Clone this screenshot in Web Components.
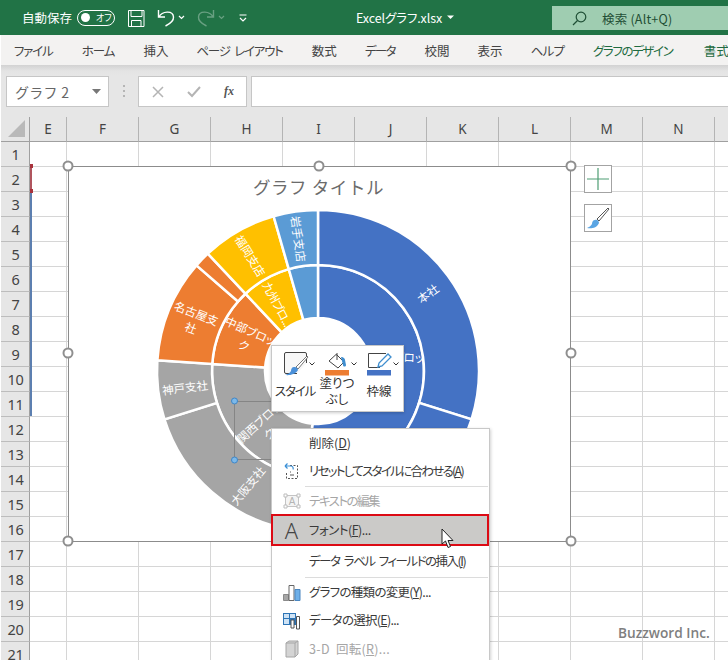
<!DOCTYPE html>
<html lang="ja">
<head>
<meta charset="utf-8">
<title>Excelグラフ.xlsx</title>
<style>
  html, body { margin: 0; padding: 0; background: #fff; }
  body { width: 728px; height: 660px; overflow: hidden; position: relative; font-family: "Noto Sans CJK JP", "Noto Sans", sans-serif; }
</style>
</head>
<body>
<xl-titlebar></xl-titlebar>
<xl-tabs>
  <xl-tab style="--ls:-1.2px">ファイル</xl-tab><xl-tab style="--ls:-1px">ホーム</xl-tab><xl-tab>挿入</xl-tab><xl-tab style="--ls:-1.25px">ページ レイアウト</xl-tab><xl-tab>数式</xl-tab><xl-tab style="--ls:-1.6px">データ</xl-tab><xl-tab>校閲</xl-tab><xl-tab>表示</xl-tab><xl-tab style="--ls:-.7px">ヘルプ</xl-tab><xl-tab accent style="--ls:-1.4px">グラフのデザイン</xl-tab><xl-tab accent style="margin-left:2px">書式</xl-tab>
</xl-tabs>
<xl-formula></xl-formula>
<xl-sheet></xl-sheet>
<xl-chart></xl-chart>
<xl-chart-tools></xl-chart-tools>
<xl-minibar></xl-minibar>
<xl-menu>
  <xl-menu-item h="28">削除(<u>D</u>)</xl-menu-item>
  <xl-menu-item h="28" icon="reset" style="--ls:-1.7px">リセットしてスタイルに合わせる(<u>A</u>)</xl-menu-item>
  <xl-menu-sep></xl-menu-sep>
  <xl-menu-item h="26" icon="edit" disabled style="--ls:-1.5px">テキストの編集</xl-menu-item>
  <xl-menu-item h="32" icon="font" hot style="--ls:-.5px">フォント(<u>F</u>)...</xl-menu-item>
  <xl-menu-item h="30" style="--ls:-1.5px">データ ラベル フィールドの挿入(<u>I</u>)</xl-menu-item>
  <xl-menu-sep></xl-menu-sep>
  <xl-menu-item h="27" icon="bars" style="--ls:-.7px">グラフの種類の変更(<u>Y</u>)...</xl-menu-item>
  <xl-menu-item h="29" icon="table" style="--ls:-.7px">データの選択(<u>E</u>)...</xl-menu-item>
  <xl-menu-item h="28" icon="cube" disabled style="--ls:.3px">3-D 回転(<u>R</u>)...</xl-menu-item>
</xl-menu>
<xl-cursor></xl-cursor>
<xl-watermark>Buzzword Inc.</xl-watermark>

<script>
class XlTitlebar extends HTMLElement {
  constructor() {
    super();
    this.attachShadow({ mode: 'open' });
    this.shadowRoot.innerHTML = `
      <style>
        :host { display: flex; align-items: center; height: 35px; background: #217346; color: #fff; font: 12.5px "Noto Sans CJK JP", sans-serif; font-feature-settings: "palt"; box-sizing: border-box; }
        .auto { margin-left: 22px; width: 55px; font-size: 12.5px; }
        .toggle { width: 38px; height: 16px; box-sizing: border-box; border: 1.5px solid #fff; border-radius: 9px; display: flex; align-items: center; padding-left: 3px; gap: 6px; }
        .toggle i { width: 9px; height: 9px; border-radius: 50%; background: #fff; }
        .toggle span { font-size: 9px; line-height: 1; }
        svg { display: block; flex: none; }
        .save { margin-left: 13px; }
        .undo { margin-left: 12px; }
        .name { margin-left: 108px; width: 86px; font-size: 12.5px; white-space: nowrap; letter-spacing: -.1px; }
        .caret { margin-left: 5px; }
        .search { margin-left: auto; margin-top: 1px; width: 176px; height: 24px; background: #9fcdb1; display: flex; align-items: center; color: #1f4f35; font-size: 12.5px; }
        .search svg { margin-left: 20px; }
        .search span { margin-left: 15px; letter-spacing: .2px; }
      </style>
      <span class="auto">自動保存</span>
      <span class="toggle"><i></i><span>オフ</span></span>
      <svg class="save" width="17" height="18" viewBox="0 0 17 18" fill="none" stroke="#fff" stroke-width="1">
        <path d="M.5 1.5h15.5v16H.5zM3 1.5v6h11v-6M3.500 17.500v-6h9.500v6"/>
      </svg>
      <svg class="undo" width="30" height="20" viewBox="0 0 30 20" fill="none" stroke="#fff">
        <path stroke-width="1.400" d="M1.500 2v7h6.500M2 9c3-6 14-7 14.500 0 .3 4-4 7-8 9"/>
        <path stroke-width="1.200" d="M22 8l2.500 2.500L27 8"/>
      </svg>
      <svg style="margin-left:10px" width="30" height="20" viewBox="0 0 30 20" fill="none" stroke="#fff" opacity=".32">
        <path stroke-width="1.400" d="M16.500 2v7H10M16 9C13 3 2 2 1.500 9c-.3 4 4 7 8 9"/>
        <path stroke-width="1.200" d="M22 8l2.500 2.500L27 8"/>
      </svg>
      <svg style="margin-left:11px" width="10" height="10" viewBox="0 0 10 10" fill="none" stroke="#fff" stroke-width="1.200">
        <path d="M1.500 2h7M2 5l3 3 3-3"/>
      </svg>
      <span class="name">Excelグラフ.xlsx</span>
      <svg class="caret" width="7" height="5" viewBox="0 0 7 5"><path d="M0 .5h7L3.500 4z" fill="#fff"/></svg>
      <div class="search">
        <svg width="15" height="15" viewBox="0 0 15 15" fill="none" stroke="#1f4f35" stroke-width="1.200"><circle cx="9" cy="6" r="4.800"/><path d="M5.500 9.500L1 14"/></svg>
        <span>検索 (Alt+Q)</span>
      </div>`;
  }
}

class XlTabs extends HTMLElement {
  constructor() {
    super();
    this.attachShadow({ mode: 'open' });
    this.shadowRoot.innerHTML = `
      <style>
        :host { display: flex; align-items: center; gap: 28px; height: 30px; margin-left: 1px; padding-left: 13px; background: #f3f2f1; white-space: nowrap; overflow: hidden; }
      </style>
      <slot></slot>`;
  }
}

class XlTab extends HTMLElement {
  constructor() {
    super();
    this.attachShadow({ mode: 'open' });
    this.shadowRoot.innerHTML = `
      <style>
        :host { display: block; flex: none; font: 12.5px "Noto Sans CJK JP", sans-serif; font-feature-settings: "palt"; color: #444; letter-spacing: var(--ls, 0); word-spacing: 3px; margin-right: calc(-1 * var(--ls, 0px)); }
        :host([accent]) { color: #1e6b41; }
      </style>
      <slot></slot>`;
  }
}

class XlFormula extends HTMLElement {
  constructor() {
    super();
    this.attachShadow({ mode: 'open' });
    this.shadowRoot.innerHTML = `
      <style>
        :host { display: flex; align-items: flex-start; height: 52px; margin-left: 1px; padding-top: 11px; box-sizing: border-box; background: linear-gradient(#d2d2d2 0, #e4e4e4 6px, #e6e6e6 10px); }
        .box { height: 31px; box-sizing: border-box; background: #fff; border: 1px solid #c6c6c6; display: flex; align-items: center; }
        .name { margin-left: 5px; width: 103px; color: #666; font: 14px "Noto Sans CJK JP", sans-serif; padding-left: 8px; justify-content: space-between; padding-right: 7px; letter-spacing: .3px; }
        .dots { width: 29px; display: flex; justify-content: center; }
        .fx { width: 109px; color: #444; }
        .fx svg { display: block; }
        .fx b { font: italic bold 12px "Liberation Serif", serif; color: #555; margin-left: 23px; }
        .input { flex: 1; margin-left: 4px; border-right: 0; }
      </style>
      <div class="box name"><span>グラフ 2</span><svg width="9" height="5" viewBox="0 0 9 5"><path d="M0 0h9L4.500 5z" fill="#777"/></svg></div>
      <div class="dots"><svg width="4" height="31" viewBox="0 0 4 31"><path d="M1 9h2v2H1zM1 14h2v2H1zM1 19h2v2H1z" fill="#b5b5b5"/></svg></div>
      <div class="box fx">
        <svg style="margin-left:13px" width="12" height="12" viewBox="0 0 12 12" fill="none" stroke="#b4b4b4" stroke-width="1.500"><path d="M1 1l10 10M11 1L1 11"/></svg>
        <svg style="margin-left:23px" width="14" height="12" viewBox="0 0 14 12" fill="none" stroke="#b4b4b4" stroke-width="2"><path d="M1 6l4 4 8-9"/></svg>
        <b>fx</b>
      </div>
      <div class="box input"></div>`;
  }
}

class XlSheet extends HTMLElement {
  constructor() {
    super();
    this.attachShadow({ mode: 'open' });
    const cols = ['E', 'F', 'G', 'H', 'I', 'J', 'K', 'L', 'M', 'N', ''];
    let cells = '<div class="corner"><svg width="18" height="18" viewBox="0 0 18 18"><path d="M17 0v17H0z" fill="#b9b9b9"/></svg></div>';
    cols.forEach(c => { cells += `<div class="ch">${c}</div>`; });
    for (let r = 1; r <= 21; r++) {
      cells += `<div class="rh">${r}</div>`;
      cols.forEach(() => { cells += '<div class="c"></div>'; });
    }
    this.shadowRoot.innerHTML = `
      <style>
        :host { display: block; margin-left: 1px; height: 543px; overflow: hidden; position: relative; background: #fff; }
        .grid { display: grid; grid-template-columns: 29px 37px repeat(9, 72px) 40px; grid-template-rows: 25px repeat(21, 25px); }
        .corner, .ch, .rh { background: #e6e6e6; color: #444; display: flex; align-items: center; justify-content: center; box-sizing: border-box; }
        .corner { border-right: 1px solid #a0a0a0; border-bottom: 1px solid #a0a0a0; align-items: flex-end; justify-content: flex-end; padding: 0 3px 3px 0; }
        .ch { font: 13.5px "Noto Sans", sans-serif; border-bottom: 1px solid #a0a0a0; border-right: 1px solid #b4b4b4; }
        .rh { font: 14.5px "Noto Sans", sans-serif; border-right: 1px solid #a0a0a0; border-bottom: 1px solid #bdbdbd; letter-spacing: -.3px; padding-left: 1px; }
        .c { box-sizing: border-box; border-right: 1px solid #d6d6d6; border-bottom: 1px solid #d6d6d6; }
        .sel { position: absolute; left: 29px; width: 1.500px; }
        .red { top: 50px; height: 25px; background: #b0555e; }
        .blue { top: 75px; height: 224px; background: #5c7fb0; }
        .tick { position: absolute; left: 29px; width: 3px; height: 4px; background: #a8323c; }
      </style>
      <div class="grid">${cells}</div>
      <div class="sel red"></div><div class="sel blue"></div>
      <div class="tick" style="top:47px"></div><div class="tick" style="top:72px"></div>`;
  }
}

class XlChart extends HTMLElement {
  constructor() {
    super();
    this.attachShadow({ mode: 'open' });
    const cx = 318, cy = 371;
    const pt = (r, a) => {
      const t = a * Math.PI / 180;
      return [(cx + r * Math.sin(t)).toFixed(2), (cy - r * Math.cos(t)).toFixed(2)];
    };
    const sector = (r0, r1, a0, a1, fill) => {
      const big = a1 - a0 > 180 ? 1 : 0;
      const [x0, y0] = pt(r1, a0), [x1, y1] = pt(r1, a1), [x2, y2] = pt(r0, a1), [x3, y3] = pt(r0, a0);
      return `<path fill="${fill}" d="M${x0} ${y0}A${r1} ${r1} 0 ${big} 1 ${x1} ${y1}L${x2} ${y2}A${r0} ${r0} 0 ${big} 0 ${x3} ${y3}Z"/>`;
    };
    const blue = '#4472c4', orange = '#ed7d31', gray = '#a5a5a5', yellow = '#ffc000', sky = '#5b9bd5';
    // inner ring, then outer ring
    const rings = [
      [53, 106, 0, 186, blue], [53, 106, 186, 273.8, gray], [53, 106, 273.8, 316.8, orange], [53, 106, 316.8, 344, yellow], [53, 106, 344, 360, sky],
      [106, 161, 0, 107.5, blue], [106, 161, 107.5, 190, blue], [106, 161, 190, 252.5, gray], [106, 161, 252.5, 273.8, gray],
      [106, 161, 273.8, 311, orange], [106, 161, 311, 316.8, orange], [106, 161, 316.8, 344, yellow], [106, 161, 344, 360, sky]
    ];
    const labels = [
      [428, 294, -36, ['本社']],
      [397, 365, 2, ['関東ブロッ', 'ク']],
      [298, 239, 82, ['岩手支店']],
      [250, 256, 58, ['福岡支店']],
      [277, 304, 62, ['九州ブロ...'], -.8],
      [193.500, 321, 21, ['名古屋支', '社']],
      [247, 338.500, 24, ['中部ブロッ', 'ク']],
      [185, 388, -7, ['神戸支社']],
      [264, 428.500, -42, ['関西ブロッ', 'ク']],
      [248, 486, -50, ['大阪支社']]
    ];
    const labelSvg = labels.map(([x, y, rot, lines, ls]) => {
      const start = -(lines.length - 1) * 7.800;
      const spans = lines.map((l, i) => `<text x="0" y="${start + i * 15.600}" dy=".36em" letter-spacing="${ls || 0}">${l}</text>`).join('');
      return `<g transform="translate(${x} ${y}) rotate(${rot})">${spans}</g>`;
    }).join('');
    const handles = [[68, 166], [319, 166], [571, 166], [68, 353], [571, 353], [68, 541], [319, 541], [571, 541]]
      .map(([x, y]) => `<circle cx="${x}" cy="${y}" r="4.500"/>`).join('');
    this.shadowRoot.innerHTML = `
      <style>
        :host { position: absolute; left: 0; top: 0; width: 728px; height: 660px; display: block; }
        svg { display: block; }
        text { font: 11.5px "Noto Sans CJK JP", sans-serif; font-feature-settings: "palt"; fill: #fff; text-anchor: middle; }
        .title { font-size: 17.500px; font-feature-settings: normal; letter-spacing: .6px; fill: #6b6b6b; }
      </style>
      <svg width="728" height="660" viewBox="0 0 728 660">
        <rect x="68.500" y="166.500" width="502" height="375" fill="#fff" stroke="#8c8c8c"/>
        <text class="title" x="318.500" y="193.500">グラフ タイトル</text>
        <g stroke="#fff" stroke-width="2.500">${rings.map(r => sector(...r)).join('')}</g>
        ${labelSvg}
        <path d="M234.500 401.500h60M234.500 401.500v58h60" fill="none" stroke="#858585"/>
        <g fill="#7cb9ea" stroke="#3f86c6" stroke-width="1"><circle cx="234.500" cy="401" r="3"/><circle cx="234.500" cy="460" r="3"/></g>
        <g fill="#fff" stroke="#8f8f8f" stroke-width="2">${handles}</g>
      </svg>`;
  }
}

class XlChartTools extends HTMLElement {
  constructor() {
    super();
    this.attachShadow({ mode: 'open' });
    this.shadowRoot.innerHTML = `
      <style>
        :host { position: absolute; left: 584px; top: 165px; display: flex; flex-direction: column; gap: 11px; }
        div { width: 28px; height: 28px; box-sizing: border-box; background: #fff; border: 1px solid #a3a3a3; display: flex; align-items: center; justify-content: center; }
        svg { display: block; }
      </style>
      <div><svg width="22" height="22" viewBox="0 0 22 22"><path d="M11 0v22M0 11h22" stroke="#4f9e74" stroke-width="1.200"/></svg></div>
      <div><svg width="24" height="24" viewBox="0 0 24 24">
        <path d="M22 2L11 13l2 2L23 3z" fill="#fff" stroke="#555" stroke-width="1"/>
        <path d="M1 22c4 1 10 0 12-5 0-2-2-4-4-3-2 0-3 2-3 4-1 2-3 3-5 4z" fill="#5aa5e3"/>
      </svg></div>`;
  }
}

class XlMinibar extends HTMLElement {
  constructor() {
    super();
    this.attachShadow({ mode: 'open' });
    const chev = '<path d="M35.500 10.500l2.500 2.500 2.500-2.500" fill="none" stroke="#333"/>';
    this.shadowRoot.innerHTML = `
      <style>
        :host { position: absolute; left: 271px; top: 345px; width: 133px; height: 67px; box-sizing: border-box; background: #fff; border: 1px solid #c8c8c8; box-shadow: 0 1px 3px rgba(0,0,0,.2); display: flex; padding: 6px 0 0 2px; font: 12.5px "Noto Sans CJK JP", sans-serif; font-feature-settings: "palt"; color: #333; }
        .b { width: 42px; display: flex; flex-direction: column; align-items: center; }
        svg { display: block; flex: none; }
        .l { height: 32px; display: flex; align-items: center; text-align: center; line-height: 16px; margin-top: -1px; white-space: nowrap; }
        .tight { letter-spacing: -1.200px; }
      </style>
      <div class="b">
        <svg width="42" height="24" viewBox="0 0 42 24">
          <path d="M23 21.500H12a1.500 1.500 0 0 1-1.500-1.500V2A1.500 1.500 0 0 1 12 .5h19A1.500 1.500 0 0 1 32.500 2v9" fill="#f7f7f7" stroke="#444"/>
          <path d="M33 4L22 15l2 2L34 5z" fill="#fff" stroke="#555" stroke-width=".8"/>
          <path d="M11 23c4 .5 10 0 13-5 0-2-2-3.500-4-3-2 0-3 2-3 4-1 2-3 3-6 4z" fill="#4a90d9"/>
          ${chev}
        </svg>
        <div class="l tight">スタイル</div>
      </div>
      <div class="b">
        <svg width="42" height="24" viewBox="0 0 42 24">
          <path d="M13 9l7-6.500 1 .5 7 7-6 6z" fill="#fff" stroke="#444"/>
          <path d="M21 1v7" stroke="#444" fill="none"/>
          <path d="M25 5c3 0 4 2 4 3l1 5c0 2-3 2-3 0z" fill="#3f8ecf"/>
          <rect x="9" y="18" width="24" height="5.500" fill="#ed7d31"/>
          ${chev}
        </svg>
        <div class="l">塗りつ<br>ぶし</div>
      </div>
      <div class="b">
        <svg width="42" height="24" viewBox="0 0 42 24">
          <path d="M22 15.500H10.500V1.500H28" fill="none" stroke="#444"/>
          <path d="M20 15l1-4L30 2l3 3-9 9z" fill="#fff" stroke="#3f8ecf" stroke-width="1.300"/>
          <rect x="9" y="18" width="24" height="5.500" fill="#4472c4"/>
          ${chev}
        </svg>
        <div class="l">枠線</div>
      </div>`;
  }
}

class XlMenu extends HTMLElement {
  constructor() {
    super();
    this.attachShadow({ mode: 'open' });
    this.shadowRoot.innerHTML = `
      <style>
        :host { position: absolute; left: 271px; top: 428px; width: 219px; box-sizing: border-box; background: #fff; border: 1px solid #c8c8c8; border-bottom: 0; box-shadow: 1px 1px 3px rgba(0,0,0,.18); display: flex; flex-direction: column; }
      </style>
      <slot></slot>`;
  }
}

class XlMenuSep extends HTMLElement {
  constructor() {
    super();
    this.attachShadow({ mode: 'open' });
    this.shadowRoot.innerHTML = `
      <style>
        :host { display: flex; align-items: center; height: 3px; padding: 0 1px 0 33px; }
        i { display: block; flex: 1; height: 1px; background: #dcdcdc; }
      </style>
      <i></i>`;
  }
}

const MENU_ICONS = {
  reset: `<svg width="18" height="18" viewBox="0 0 18 18" fill="none">
      <path d="M7 3.500h7.500v13h-11V10" stroke="#555" stroke-dasharray="2 1.500"/>
      <path d="M2 4h6c2 0 2.500 2 2 3.500M2 4l2.500-2.500M2 4l2.500 2.500" stroke="#3a8fd6" stroke-width="1.200"/>
      <path d="M7 10h1M7 13h4" stroke="#555"/></svg>`,
  edit: `<svg width="18" height="16" viewBox="0 0 18 16" fill="none">
      <rect x="2.500" y="2.500" width="13" height="11" stroke="#c4c4c4" fill="#f4f4f4"/>
      <path d="M1 1h3v3H1zM14 1h3v3h-3zM1 12h3v3H1zM14 12h3v3h-3z" fill="#fff" stroke="#bdbdbd"/>
      <text x="9" y="12" text-anchor="middle" style='font:10px "Liberation Sans",sans-serif' fill="#b5b5b5">A</text></svg>`,
  font: `<span class="big">A</span>`,
  bars: `<svg width="18" height="18" viewBox="0 0 18 18">
      <path d="M.5 10.500h5v6h-5z" fill="#a6a6a6" stroke="#8a8a8a"/>
      <path d="M6 1.500h5v15H6z" fill="#fff" stroke="#666"/>
      <path d="M12 5.500h5v11h-5z" fill="#6fb0e8" stroke="#4a86c0"/></svg>`,
  table: `<svg width="18" height="18" viewBox="0 0 18 18" fill="none">
      <path d="M0 1h13v12H0z" fill="#2e75b6"/>
      <path d="M1 2h5v4H1zM7 2h5v4H7zM1 7h5v5H1z" fill="#cfe3f5"/>
      <path d="M8 8h3v8H8zM13.500 4.500h3V17h-3z" fill="#fff" stroke="#555"/></svg>`,
  cube: `<svg width="16" height="18" viewBox="0 0 16 18">
      <path d="M2 3l3-2h9v13l-3 3H2z" fill="#d4d4d4" stroke="#a6a6a6"/>
      <path d="M2 3h9v14M11 3l3-2" fill="none" stroke="#a6a6a6"/></svg>`
};

class XlMenuItem extends HTMLElement {
  constructor() {
    super();
    this.attachShadow({ mode: 'open' });
  }
  connectedCallback() {
    const h = this.getAttribute('h') || 28;
    const icon = MENU_ICONS[this.getAttribute('icon')] || '';
    this.shadowRoot.innerHTML = `
      <style>
        :host { display: flex; align-items: center; height: ${h}px; box-sizing: border-box; font: 12.5px "Noto Sans CJK JP", sans-serif; font-feature-settings: "palt"; color: #3a3a3a; white-space: nowrap; }
        :host([disabled]) { color: #a6a6a6; }
        :host([hot]) { background: #cbcac8; border: 2.500px solid #dc0a14; margin: 0 0 0 -1px; }
        :host([hot]) .ic { margin-left: -1px; }
        .ic { width: 37px; flex: none; display: flex; justify-content: center; padding-left: 2px; box-sizing: border-box; }
        .t { padding-bottom: 2px; letter-spacing: var(--ls, 0); word-spacing: 3px; }
        svg { display: block; }
        .big { font: 300 22px "Noto Sans", sans-serif; color: #444; line-height: 1; }
      </style>
      <div class="ic">${icon}</div><div class="t"><slot></slot></div>`;
  }
}

class XlCursor extends HTMLElement {
  constructor() {
    super();
    this.attachShadow({ mode: 'open' });
    this.shadowRoot.innerHTML = `
      <style>
        :host { position: absolute; left: 441px; top: 528px; width: 14px; height: 21px; display: block; }
      </style>
      <svg width="14" height="21" viewBox="0 0 14 21">
        <path d="M1 1v15l3.500-3 2.500 6.500 2.500-1-2.500-6h5z" fill="#fff" stroke="#222" stroke-width="1"/>
      </svg>`;
  }
}

class XlWatermark extends HTMLElement {
  constructor() {
    super();
    this.attachShadow({ mode: 'open' });
    this.shadowRoot.innerHTML = `
      <style>
        :host { position: absolute; left: 618px; top: 624px; display: block; font: 600 13.700px/18px "Open Sans", sans-serif; color: #7f7f7f; white-space: nowrap; }
      </style>
      <slot></slot>`;
  }
}

customElements.define('xl-titlebar', XlTitlebar);
customElements.define('xl-tabs', XlTabs);
customElements.define('xl-tab', XlTab);
customElements.define('xl-formula', XlFormula);
customElements.define('xl-sheet', XlSheet);
customElements.define('xl-chart', XlChart);
customElements.define('xl-chart-tools', XlChartTools);
customElements.define('xl-minibar', XlMinibar);
customElements.define('xl-menu', XlMenu);
customElements.define('xl-menu-sep', XlMenuSep);
customElements.define('xl-menu-item', XlMenuItem);
customElements.define('xl-cursor', XlCursor);
customElements.define('xl-watermark', XlWatermark);
</script>
</body>
</html>
